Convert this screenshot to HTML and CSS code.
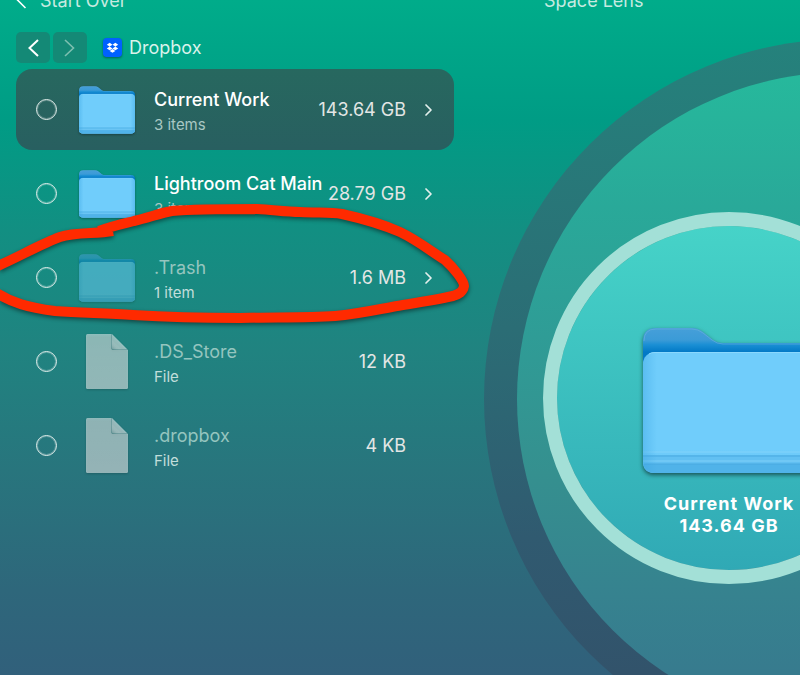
FILE: index.html
```html
<!DOCTYPE html>
<html lang="en">
<head>
<meta charset="utf-8">
<meta name="viewport" content="width=device-width, initial-scale=1">
<title>Space Lens</title>
<link rel="stylesheet" href="styles.css">
</head>
<body>
<svg class="defs" aria-hidden="true">
  <defs>
    <linearGradient id="folder-back" x1="0" y1="0" x2="0" y2="1">
      <stop offset="0" stop-color="#469fd9"/>
      <stop offset=".2" stop-color="#3b9bd7"/>
      <stop offset=".28" stop-color="#1a8fd4"/>
      <stop offset=".4" stop-color="#0279c6"/>
    </linearGradient>
    <linearGradient id="folder-front" x1="0" y1="0" x2="0" y2="1">
      <stop offset="0" stop-color="#70cdfb"/>
      <stop offset=".8" stop-color="#70cdfb"/>
      <stop offset="1" stop-color="#66c4f5"/>
    </linearGradient>
    <linearGradient id="folder-side" x1="0" y1="0" x2="1" y2="0">
      <stop offset="0" stop-color="#3aa5e2" stop-opacity=".4"/>
      <stop offset=".08" stop-color="#3aa5e2" stop-opacity="0"/>
      <stop offset=".92" stop-color="#3aa5e2" stop-opacity="0"/>
      <stop offset="1" stop-color="#3aa5e2" stop-opacity=".4"/>
    </linearGradient>
    <linearGradient id="paper" x1="0" y1="0" x2="0" y2="1">
      <stop offset="0" stop-color="#fff" stop-opacity=".5"/>
      <stop offset="1" stop-color="#fff" stop-opacity=".52"/>
    </linearGradient>
    <linearGradient id="paper-fold" x1="0" y1="1" x2="1" y2="0">
      <stop offset="0" stop-color="#2d6f70" stop-opacity=".5"/>
      <stop offset=".35" stop-color="#fff" stop-opacity=".05"/>
      <stop offset="1" stop-color="#fff" stop-opacity=".15"/>
    </linearGradient>
    <symbol id="folder" viewBox="0 0 172 146">
      <path d="M0 13Q0 0 13 0H49Q55 0 60 4L70 12Q74 15 80 15H160Q172 15 172 27V60H0Z" fill="url(#folder-back)"/>
      <path d="M1 13Q1 1 13 1H49Q55 1 60 5L69 12Q74 16 80 16H160" fill="none" stroke="#6cb0dd" stroke-opacity=".6"/>
      <rect y="24" width="172" height="121" rx="12" fill="url(#folder-front)"/>
      <path d="M0 127H172V133Q172 145 160 145H12Q0 145 0 133Z" fill="#62c0f2"/>
      <path d="M0 136H172Q171 145 160 145H12Q1 145 0 136Z" fill="#50b3e9"/>
      <path d="M0 128H172M1 136H171" stroke="#48aae1"/>
      <path d="M0 124H172M0 133H172" stroke="#86d5fb" stroke-opacity=".4" stroke-width="2"/>
      <rect y="24" width="172" height="121" rx="12" fill="url(#folder-side)"/>
      <path d="M6 26Q8 24.500 12 24.500H160Q164 24.500 166 26" fill="none" stroke="#8ad8fd"/>
    </symbol>
    <symbol id="file" viewBox="0 0 42 55">
      <path d="M1.500 0H26L42 16V53.500Q42 55 40.500 55H1.500Q0 55 0 53.500V1.500Q0 0 1.500 0Z" fill="url(#paper)"/>
      <path d="M25.500 0L42 16H27Q25.500 16 25.500 14.500Z" fill="url(#paper-fold)"/>
      <path d="M25.500 0V14.500Q25.500 15.500 27 15.500H42" fill="none" stroke="#2f7475" stroke-opacity=".35"/>
    </symbol>
    <symbol id="chevron" viewBox="0 0 7 12">
      <path d="M1 1L6 6L1 11" fill="none" stroke="currentColor" stroke-width="1.700" stroke-linecap="round" stroke-linejoin="round"/>
    </symbol>
  </defs>
</svg>

<div class="window">
  <header class="topbar">
    <a class="back" href="#">
      <svg class="back-icon" viewBox="0 0 10 18" aria-hidden="true"><path d="M9 1L1 9L9 17" fill="none" stroke="currentColor" stroke-width="1.600"/></svg>
      Start Over
    </a>
    <h1 class="title">Space Lens</h1>
  </header>

  <div class="content">
    <section class="browser" aria-label="Files">
      <nav class="path">
        <button class="step" type="button" aria-label="Back">
          <svg viewBox="0 0 12 18" aria-hidden="true"><path d="M11 1L2.500 9L11 17" fill="none" stroke="currentColor" stroke-width="2"/></svg>
        </button>
        <button class="step" type="button" aria-label="Forward" disabled>
          <svg viewBox="0 0 12 18" aria-hidden="true"><path d="M1 1L9.500 9L1 17" fill="none" stroke="currentColor" stroke-width="1.600"/></svg>
        </button>
        <span class="place">
          <svg class="place-icon" viewBox="0 0 20 20" aria-hidden="true">
            <rect width="20" height="20" rx="4" fill="#0061fe"/>
            <path d="M7 5L10 7L7 9L4 7ZM13 5L16 7L13 9L10 7ZM7 9L10 11L7 13L4 11ZM13 9L16 11L13 13L10 11ZM10 11.700L13 13.600L10 15.500L7 13.600Z" fill="#fff"/>
          </svg>
          Dropbox
        </span>
      </nav>

      <ul class="list">
        <li class="row selected">
          <input class="tick" type="checkbox" id="f1">
          <svg class="icon" aria-hidden="true"><use href="#folder"/></svg>
          <label class="info" for="f1"><span class="name">Current Work</span><span class="kind">3 items</span></label>
          <span class="size">143.64 GB</span>
          <svg class="chevron" aria-hidden="true"><use href="#chevron"/></svg>
        </li>
        <li class="row">
          <input class="tick" type="checkbox" id="f2">
          <svg class="icon" aria-hidden="true"><use href="#folder"/></svg>
          <label class="info" for="f2"><span class="name">Lightroom Cat Main</span><span class="kind">3 items</span></label>
          <span class="size">28.79 GB</span>
          <svg class="chevron" aria-hidden="true"><use href="#chevron"/></svg>
        </li>
        <li class="row hidden-item">
          <input class="tick" type="checkbox" id="f3">
          <svg class="icon faded" aria-hidden="true"><use href="#folder"/></svg>
          <label class="info" for="f3"><span class="name">.Trash</span><span class="kind">1 item</span></label>
          <span class="size">1.6 MB</span>
          <svg class="chevron" aria-hidden="true"><use href="#chevron"/></svg>
        </li>
        <li class="row hidden-item">
          <input class="tick" type="checkbox" id="f4">
          <svg class="icon document" aria-hidden="true"><use href="#file"/></svg>
          <label class="info" for="f4"><span class="name">.DS_Store</span><span class="kind">File</span></label>
          <span class="size">12 KB</span>
          <span class="chevron"></span>
        </li>
        <li class="row hidden-item">
          <input class="tick" type="checkbox" id="f5">
          <svg class="icon document" aria-hidden="true"><use href="#file"/></svg>
          <label class="info" for="f5"><span class="name">.dropbox</span><span class="kind">File</span></label>
          <span class="size">4 KB</span>
          <span class="chevron"></span>
        </li>
      </ul>
    </section>

    <section class="map" aria-label="Space map">
      <div class="ring"></div>
      <div class="bubble">
        <svg class="bubble-icon" aria-hidden="true"><use href="#folder"/></svg>
        <div class="bubble-label">Current Work<br>143.64 GB</div>
      </div>
    </section>
  </div>

  <svg class="marker" viewBox="0 0 480 340" aria-hidden="true">
    <path d="M-12 270C10 262 40 244 60 237C75 232 95 234 113 231M99 231C112 226 122 224 134 221C148 218 160 213 172 211C195 209 230 209 257 209C275 210 285 212 300 212C320 213 330 212 342 214C360 218 382 224 400 232C417 240 432 252 445 260C454 268 464 281 464 286C463 292 459 294 453 296C435 300 415 303 397 306C375 310 358 314 335 316C305 318 270 317 240 318C205 318 165 317 133 315C105 313 80 313 55 311C32 308 10 304 -12 287" fill="none" stroke="#ff2a00" stroke-width="10" stroke-linejoin="round"/>
  </svg>
</div>
</body>
</html>
```

FILE: styles.css
```css
* {
  box-sizing: border-box;
}

body {
  margin: 0;
  font-family: Inter, "Liberation Sans", sans-serif;
  font-size: 18px;
  color: #fff;
}

.defs {
  position: absolute;
  width: 0;
  height: 0;
}

.window {
  position: relative;
  min-height: 100vh;
  overflow: hidden;
  background: linear-gradient(180deg, #00ac8a 0, #009c85 120px, #128f82 230px, #208380 350px, #28757d 470px, #2e677b 590px, #31607b 675px);
}

.topbar {
  display: grid;
  grid-template-columns: 528px 1fr;
  align-items: center;
  height: 32px;
  margin-top: -16px;
  padding: 0 16px;
}

.back {
  display: flex;
  align-items: center;
  gap: 13px;
  color: #c6eae0;
  text-decoration: none;
}

.back-icon {
  width: 11px;
  height: 18px;
  color: #fff;
}

.title {
  margin: 0;
  font-size: 18px;
  font-weight: 400;
  color: #c6eae0;
}

.content {
  display: grid;
  grid-template-columns: 438px 1fr;
  padding: 16px 0 0 16px;
}

.path {
  display: flex;
  align-items: center;
  gap: 3px;
  height: 31px;
  margin-bottom: 6px;
}

.step {
  display: grid;
  place-items: center;
  width: 34px;
  height: 31px;
  padding: 0;
  border: 0;
  border-radius: 5px;
  background: #148976;
  color: #fff;
}

.step:disabled {
  color: #7dbfb0;
}

.step svg {
  width: 12px;
  height: 18px;
}

.place {
  display: flex;
  align-items: center;
  gap: 7px;
  margin-left: 13px;
  color: #d9f2eb;
}

.place-icon {
  width: 19px;
  height: 19px;
  filter: drop-shadow(0 1px 1px #0006);
}

.list {
  display: flex;
  flex-direction: column;
  gap: 3px;
  margin: 0;
  padding: 0;
  list-style: none;
}

.row {
  display: flex;
  align-items: center;
  height: 81px;
  padding: 0 22px 0 20px;
  border-radius: 16px;
}

.selected {
  background: linear-gradient(#27685f, #285f60);
}

.tick {
  flex: none;
  width: 21px;
  height: 21px;
  margin: 0 22px 0 0;
  appearance: none;
  border: 1px solid #e3efec;
  border-radius: 50%;
  box-shadow: 0 0 0 1px #ffffff40 inset;
}

.tick:checked {
  background: #fff;
}

.icon {
  flex: none;
  width: 56px;
  height: 48px;
  margin-right: 19px;
  filter: drop-shadow(0 1px 1px #0005);
}

.faded {
  opacity: .5;
}

.document {
  height: 55px;
}

.info {
  display: flex;
  flex: 1;
  flex-direction: column;
  padding-top: 4px;
  white-space: nowrap;
}

.name {
  font-weight: 500;
  line-height: 26px;
}

.kind {
  font-size: 15px;
  line-height: 24px;
  color: #a9c8c3;
}

.hidden-item .name {
  font-weight: 400;
  color: #95c5bf;
}

.hidden-item .kind {
  color: #c2dedb;
}

.size {
  color: #e3e6e5;
}

.chevron {
  flex: none;
  width: 7px;
  height: 12px;
  margin-left: 19px;
  color: #e3efec;
}

.map {
  position: relative;
}

.ring {
  position: absolute;
  top: 7px;
  left: 30px;
  width: 720px;
  height: 720px;
  padding: 33px;
  border-radius: 50%;
  background: linear-gradient(#25827c 0, #2b6d75 290px, #305a70 500px, #32536b 634px);
}

.ring::before {
  content: "";
  display: block;
  height: 100%;
  border-radius: 50%;
  background: linear-gradient(#26b99c 0, #29a999 135px, #2f9c96 265px, #35908f 400px, #36828f 525px, #377b8e 600px);
}

.bubble {
  position: absolute;
  top: 180px;
  left: 89px;
  display: flex;
  flex-direction: column;
  align-items: center;
  width: 372px;
  height: 372px;
  padding-top: 102px;
  border: 14px solid #a3e0d7;
  border-radius: 50%;
  background: linear-gradient(#46d3c8, #30a9b5) padding-box;
}

.bubble-icon {
  flex: none;
  width: 172px;
  height: 146px;
  filter: drop-shadow(0 2px 2px #0008);
}

.bubble-label {
  margin-top: 19px;
  font-size: 18px;
  font-weight: 700;
  line-height: 22px;
  letter-spacing: 1px;
  text-align: center;
}

.marker {
  position: absolute;
  top: 0;
  left: 0;
  width: 480px;
  height: 340px;
  pointer-events: none;
  filter: drop-shadow(0 2px 2px #0007);
}
```
